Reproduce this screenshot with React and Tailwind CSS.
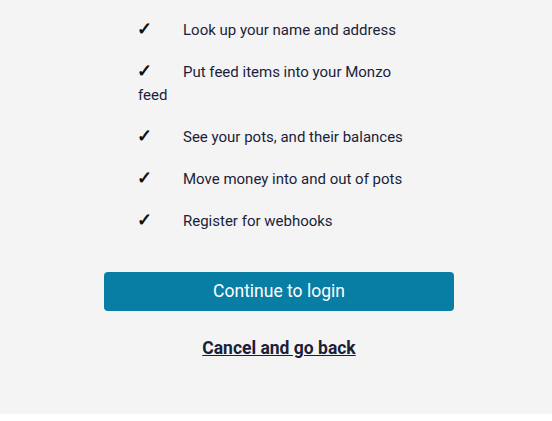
import React from "react";

const permissions = [
  "Look up your name and address",
  "Put feed items into your Monzo feed",
  "See your pots, and their balances",
  "Move money into and out of pots",
  "Register for webhooks",
];

export default function App() {
  return (
    <div className="bg-white min-h-screen" style={{ fontFamily: "Roboto, 'Liberation Sans', sans-serif" }}>
      <div className="bg-[#f4f4f4] pl-[6px] pt-[19px] pb-[52px] text-[#1b1e3a]">
        {/* Permission list */}
        <ul className="w-[276px] mx-auto -translate-x-[3px]">
          {permissions.map((item) => (
            <li key={item} className="text-[15px] leading-[23px] mb-[19px] last:mb-0">
              <span className="inline-block w-[45px] text-[18px] leading-[0] font-bold text-[#111]">
                <span className="relative -left-[1px]">✓</span>
              </span>
              {item}
            </li>
          ))}
        </ul>

        {/* Actions */}
        <div className="flex flex-col items-center mt-[39px]">
          <button className="w-[350px] h-[39px] rounded-[4px] bg-[#087ea4] text-white text-[17.5px]">
            Continue to login
          </button>
          <a href="#" className="mt-[24px] text-[17.5px] leading-[27px] font-bold underline">
            Cancel and go back
          </a>
        </div>
      </div>
    </div>
  );
}
